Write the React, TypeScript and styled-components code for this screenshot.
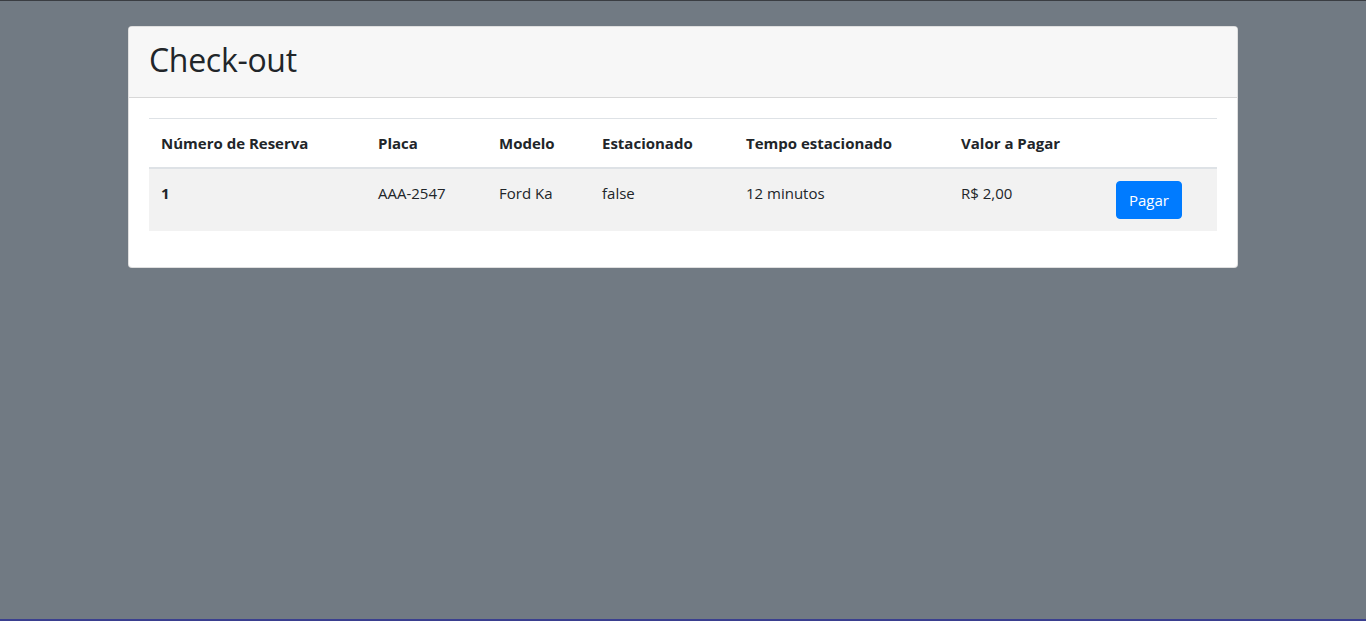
import React from "react";
import styled, { createGlobalStyle } from "styled-components";

const Global = createGlobalStyle`
  html, body { margin: 0; padding: 0; background: #717a83; }
  body {
    font-family: "Open Sans", "Noto Sans", sans-serif;
    font-size: 16px;
    line-height: 1.5;
    color: #212529;
  }
  * { box-sizing: border-box; }
`;

const Page = styled.div`
  min-height: 621px;
  border-top: 1px solid #3a3d42;
  border-bottom: 2px solid #3a3f8f;
  padding-top: 25px;
  display: flex;
  justify-content: center;
`;

const Card = styled.section`
  width: 1110px;
  align-self: flex-start;
  background: #fff;
  border: 1px solid rgba(0, 0, 0, 0.125);
  border-radius: 4px;
  overflow: hidden;
`;

const CardHeader = styled.header`
  background: #f7f7f7;
  border-bottom: 1px solid rgba(0, 0, 0, 0.125);
  padding: 14px 20px 10px;
`;

const Title = styled.h2`
  margin: 0 0 8px;
  font-size: 32px;
  font-weight: 500;
  line-height: 1.2;
  letter-spacing: -0.3px;
`;

const CardBody = styled.div`
  padding: 20px;
`;

const Table = styled.table`
  width: 100%;
  table-layout: fixed;
  border-collapse: collapse;
  margin-bottom: 16px;
`;

const Col = styled.col<{ $w: number }>`
  width: ${(p) => p.$w}px;
`;

const Th = styled.th`
  text-align: left;
  font-weight: 700;
  font-size: 15px;
  line-height: 24px;
  padding: 12px;
  border-top: 1px solid #dee2e6;
  border-bottom: 2px solid #dee2e6;
  white-space: nowrap;
  vertical-align: bottom;
`;

const Row = styled.tr<{ $striped?: boolean }>`
  background: ${(p) => (p.$striped ? "rgba(0,0,0,0.05)" : "transparent")};
`;

const Td = styled.td<{ $bold?: boolean }>`
  padding: 12px;
  border-top: 1px solid #dee2e6;
  vertical-align: top;
  font-size: 15px;
  line-height: 24px;
  font-weight: ${(p) => (p.$bold ? 700 : 400)};
  white-space: nowrap;
`;

const Button = styled.button`
  font-family: inherit;
  font-size: 15px;
  line-height: 24px;
  padding: 6px 12px;
  color: #fff;
  background: #007bff;
  border: 1px solid #007bff;
  border-radius: 4px;
  cursor: pointer;
  display: block;
`;

const widths = [217, 121, 103, 144, 215, 155, 113];

export default function App() {
  return (
    <>
      <Global />
      <Page>
        <Card>
          <CardHeader>
            <Title>Check-out</Title>
          </CardHeader>
          <CardBody>
            <Table>
              <colgroup>
                {widths.map((w, i) => (
                  <Col key={i} $w={w} />
                ))}
              </colgroup>
              <thead>
                <tr>
                  <Th>Número de Reserva</Th>
                  <Th>Placa</Th>
                  <Th>Modelo</Th>
                  <Th>Estacionado</Th>
                  <Th>Tempo estacionado</Th>
                  <Th>Valor a Pagar</Th>
                  <Th></Th>
                </tr>
              </thead>
              <tbody>
                <Row $striped>
                  <Td $bold>1</Td>
                  <Td>AAA-2547</Td>
                  <Td>Ford Ka</Td>
                  <Td>false</Td>
                  <Td>12 minutos</Td>
                  <Td>R$ 2,00</Td>
                  <Td>
                    <Button>Pagar</Button>
                  </Td>
                </Row>
              </tbody>
            </Table>
          </CardBody>
        </Card>
      </Page>
    </>
  );
}
